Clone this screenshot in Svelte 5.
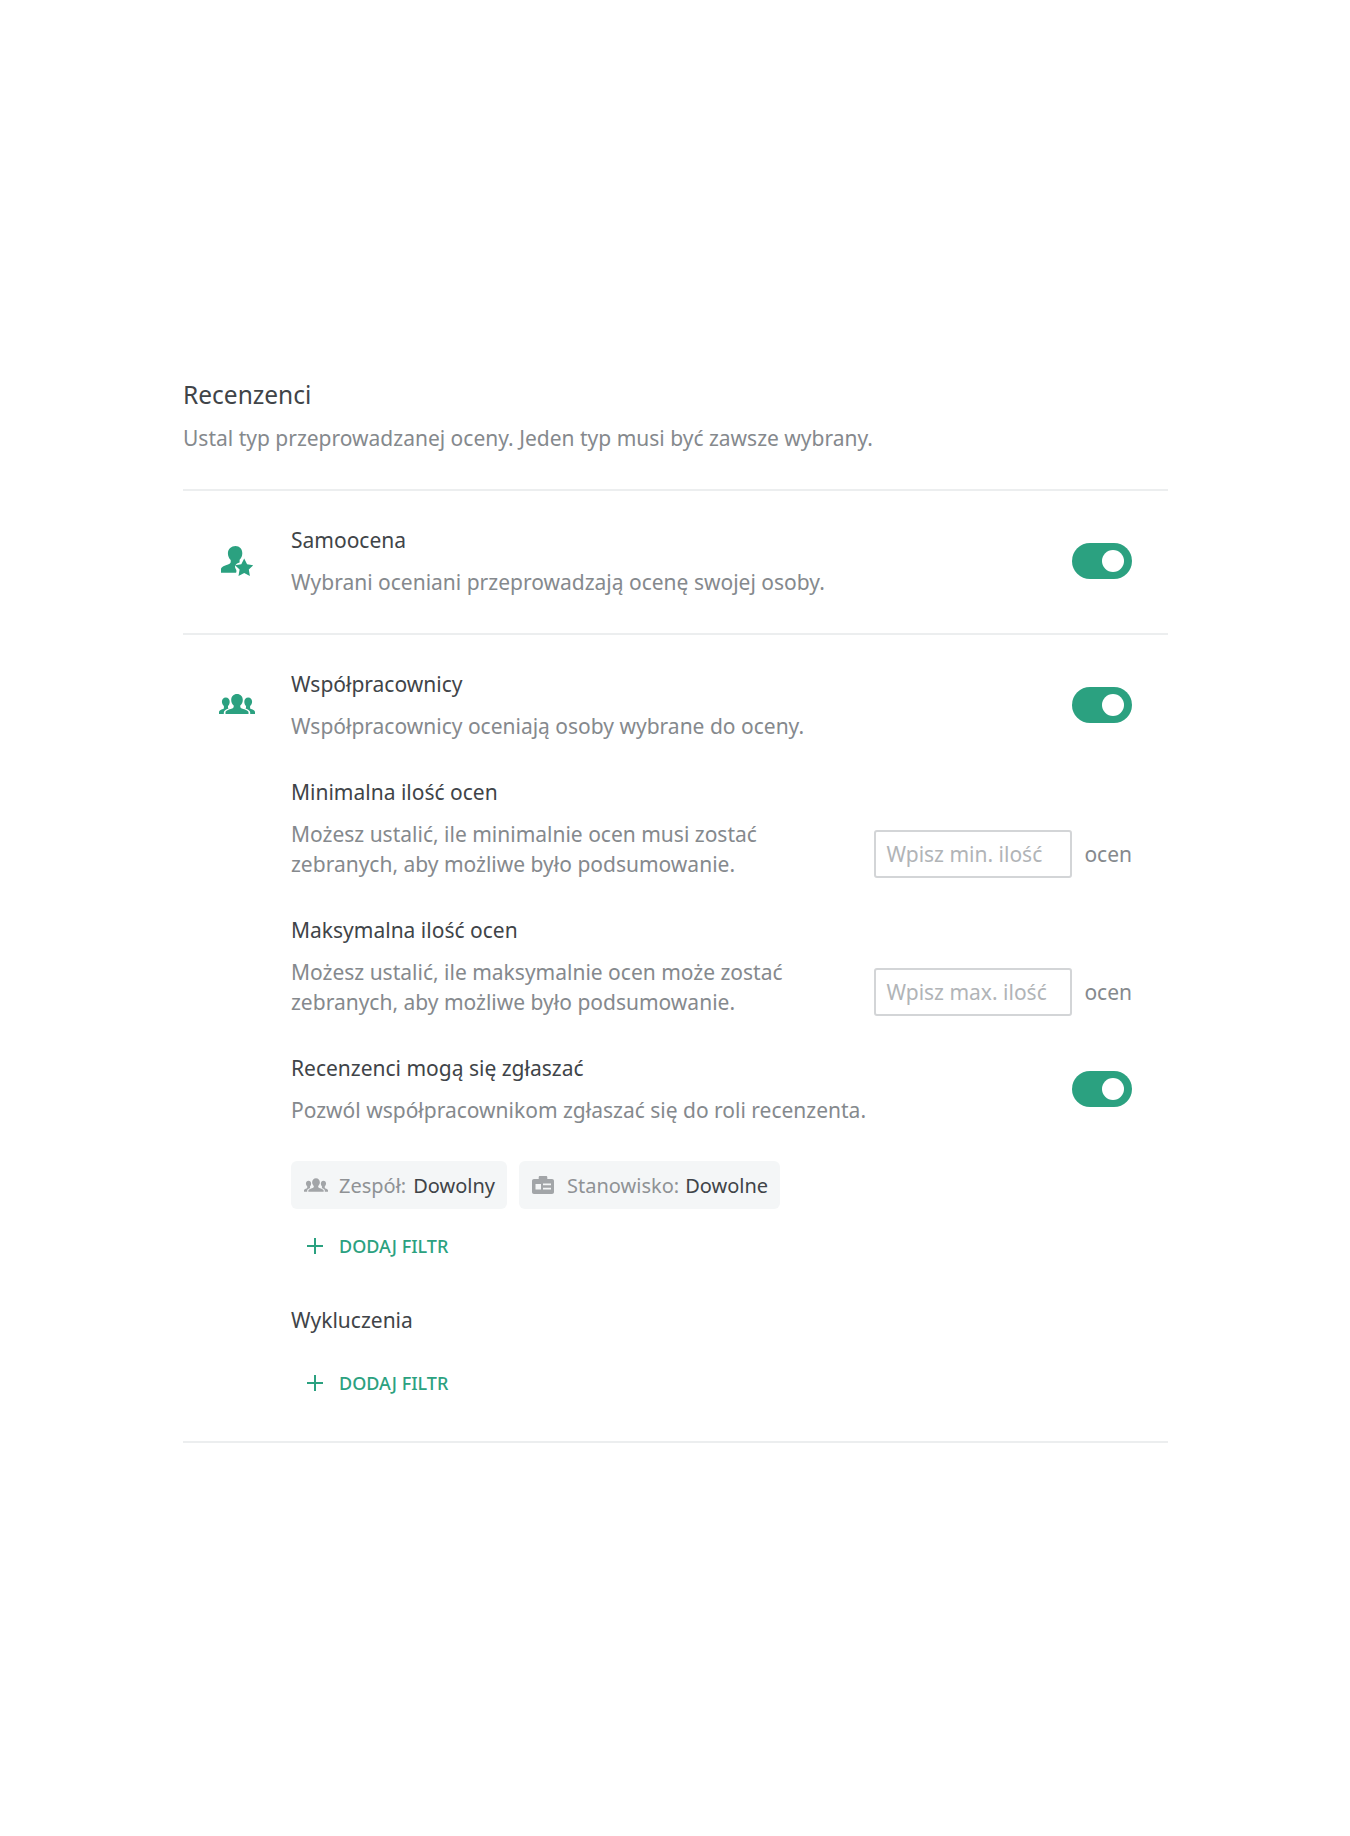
<script>
</script>

{#snippet people(cls)}
  <svg class={cls} viewBox="0 0 36 20" aria-hidden="true">
    <path d="M18 0c3.400 0 5.800 2.500 5.800 6 0 2.400-1.100 4.300-2.500 5.400v1.300c0 .9.600 1.300 1.600 1.700 3.500 1.200 6.600 2.200 6.600 3.800V20H6.500v-1.800c0-1.600 3.100-2.600 6.600-3.800 1-.4 1.600-.8 1.600-1.700v-1.300c-1.400-1.100-2.500-3-2.500-5.400C12.200 2.500 14.600 0 18 0z"/>
    <path d="M6.800 3.500c2.300 0 3.900 1.800 3.900 4.300 0 1.800-.7 3.300-1.700 4.300v1.500c0 .5.200.8.500 1-2.600 1-4.700 2.100-4.700 3.800V20H0v-2c0-1.500 1.900-2.200 3.900-2.900.7-.3 1-.6 1-1.200v-1.800C3.900 11.100 2.900 9.600 2.900 7.800c0-2.500 1.600-4.300 3.900-4.300z"/>
    <path d="M29.200 3.500c2.300 0 3.900 1.800 3.900 4.300 0 1.800-1 3.300-2 4.300v1.800c0 .6.300.9 1 1.200 2 .7 3.900 1.400 3.900 2.900v2h-4.800v-1.600c0-1.700-2.100-2.800-4.700-3.800.3-.2.500-.5.500-1v-1.500c-1-1-1.700-2.500-1.700-4.300 0-2.500 1.600-4.300 3.900-4.300z"/>
  </svg>
{/snippet}

{#snippet toggle()}
  <span class="toggle"><span class="knob"></span></span>
{/snippet}

{#snippet plus()}
  <button class="add" type="button">
    <svg viewBox="0 0 16 16" aria-hidden="true"><path d="M8 0v16M0 8h16"/></svg>
    <span>DODAJ FILTR</span>
  </button>
{/snippet}

<main class="page">
  <section class="panel">
    <header class="head">
      <h2>Recenzenci</h2>
      <p>Ustal typ przeprowadzanej oceny. Jeden typ musi być zawsze wybrany.</p>
    </header>

    <article class="group first">
      <div class="icon">
        <svg class="self" viewBox="0 0 32 31" aria-hidden="true">
          <path d="M14.500 0c4 0 6.800 3 6.800 7.200 0 2.800-1.100 5-2.700 6.500v2.700c-2 .5-3.500 1.500-4.200 2.800-.7 1.400-.3 2.700.5 4 .6 1 .8 2.100.2 3.500H0v-3.400c0-2.400 3-3.400 7-4.900 1.500-.5 2.700-1.100 2.700-2.300v-2C8 12.200 6.900 10 6.900 7.200 6.900 3 10.500 0 14.500 0z"/>
          <path d="M23.200 12.500l2.900 5.800 6.300.9-4.600 4.400 1.100 6.400-5.700-3-5.700 3 1.100-6.400-4.600-4.400 6.300-.9z"/>
        </svg>
      </div>
      <div class="body">
        <div class="line">
          <div class="text">
            <h3>Samoocena</h3>
            <p>Wybrani oceniani przeprowadzają ocenę swojej osoby.</p>
          </div>
          {@render toggle()}
        </div>
      </div>
    </article>

    <article class="group">
      <div class="icon">{@render people("team")}</div>
      <div class="body">
        <div class="line">
          <div class="text">
            <h3>Współpracownicy</h3>
            <p>Współpracownicy oceniają osoby wybrane do oceny.</p>
          </div>
          {@render toggle()}
        </div>

        <div class="line sub bottom">
          <div class="text narrow">
            <h3>Minimalna ilość ocen</h3>
            <p>Możesz ustalić, ile minimalnie ocen musi zostać zebranych, aby możliwe było podsumowanie.</p>
          </div>
          <div class="amount">
            <input type="text" placeholder="Wpisz min. ilość" />
            <span>ocen</span>
          </div>
        </div>

        <div class="line sub bottom">
          <div class="text narrow">
            <h3>Maksymalna ilość ocen</h3>
            <p>Możesz ustalić, ile maksymalnie ocen może zostać zebranych, aby możliwe było podsumowanie.</p>
          </div>
          <div class="amount">
            <input type="text" placeholder="Wpisz max. ilość" />
            <span>ocen</span>
          </div>
        </div>

        <div class="line sub">
          <div class="text">
            <h3>Recenzenci mogą się zgłaszać</h3>
            <p>Pozwól współpracownikom zgłaszać się do roli recenzenta.</p>
          </div>
          {@render toggle()}
        </div>

        <div class="chips">
          <div class="chip">
            {@render people("chip-team")}
            <span class="key">Zespół:</span>
            <span class="val">Dowolny</span>
          </div>
          <div class="chip">
            <svg class="chip-job" viewBox="0 0 22 18" aria-hidden="true">
              <path fill-rule="evenodd" d="M8 0h6c.8 0 1.300.5 1.300 1.300V3H20c1.200 0 2 .8 2 2v11c0 1.200-.8 2-2 2H2c-1.200 0-2-.8-2-2V5c0-1.200.8-2 2-2h4.700V1.300C6.700.5 7.200 0 8 0zM3.500 8v5.500H9V8zm7.500-.5v1.800h8V7.500zm0 4.200v1.800h8v-1.800z"/>
            </svg>
            <span class="key tight">Stanowisko:</span>
            <span class="val">Dowolne</span>
          </div>
        </div>

        {@render plus()}

        <h3 class="excl">Wykluczenia</h3>

        {@render plus()}
      </div>
    </article>
  </section>
</main>

<style>
  :global(body) {
    margin: 0;
    background: #fff;
  }

  .page {
    height: 1836px;
    padding-top: 375px;
    box-sizing: border-box;
    font-family: "Noto Sans", "Open Sans", sans-serif;
    color: #404448;
  }

  .panel {
    width: 985px;
    margin-left: 183px;
  }

  .head {
    padding-bottom: 31px;
    border-bottom: 2px solid #eceeef;
  }

  h2 {
    margin: 0;
    font-size: 24.5px;
    line-height: 40px;
    font-weight: 400;
  }

  .head p {
    margin: 3px 0 0;
    font-size: 21px;
    line-height: 40px;
    color: #85898d;
  }

  .group {
    display: flex;
    padding: 34px 36px 34px 0;
    border-bottom: 2px solid #eceeef;
  }

  .first {
    padding-bottom: 36px;
  }

  .icon {
    width: 108px;
    height: 72px;
    flex: none;
    display: flex;
    align-items: center;
    justify-content: center;
  }

  .self {
    width: 32px;
    height: 31px;
    fill: #2ba180;
  }

  .team {
    width: 36px;
    height: 20px;
    margin-bottom: 2px;
    fill: #2ba180;
  }

  .body {
    flex: 1;
    min-width: 0;
  }

  .line {
    display: flex;
    align-items: center;
    justify-content: space-between;
  }

  .bottom {
    align-items: flex-end;
  }

  .sub {
    margin-top: 36px;
  }

  .text {
    min-width: 0;
  }

  .narrow {
    width: 500px;
  }

  h3 {
    margin: 0;
    font-size: 21px;
    line-height: 30px;
    font-weight: 400;
    color: #404448;
  }

  .text p {
    margin: 12px 0 0;
    font-size: 21px;
    line-height: 30px;
    color: #85898d;
  }

  .toggle {
    width: 60px;
    height: 36px;
    flex: none;
    border-radius: 18px;
    background: #2ba180;
    display: flex;
    align-items: center;
    justify-content: flex-end;
    padding-right: 8px;
    box-sizing: border-box;
  }

  .knob {
    width: 22px;
    height: 22px;
    border-radius: 50%;
    background: #fff;
  }

  .amount {
    display: flex;
    align-items: center;
    gap: 12px;
    margin-bottom: 1px;
    font-size: 21px;
    color: #85898d;
  }

  input {
    width: 198px;
    height: 48px;
    box-sizing: border-box;
    padding: 0 10px;
    border: 2px solid #d3d5d7;
    border-radius: 3px;
    background: #fff;
    font: inherit;
    color: #404448;
    outline: none;
  }

  input::placeholder {
    color: #b1b4b7;
    opacity: 1;
  }

  .chips {
    display: flex;
    gap: 12px;
    margin-top: 36px;
  }

  .chip {
    height: 48px;
    display: flex;
    align-items: center;
    padding: 0 12px 0 13px;
    border-radius: 6px;
    background: #f4f6f7;
    font-size: 20px;
  }

  .chip-team {
    width: 24px;
    height: 14px;
    margin-right: 11px;
    fill: #a2a5a8;
  }

  .chip-job {
    width: 22px;
    height: 18px;
    margin-right: 13px;
    fill: #a2a5a8;
  }

  .key {
    color: #8f9295;
    margin-right: 7px;
  }

  .tight {
    margin-right: 6px;
  }

  .val {
    color: #404448;
  }

  .add {
    display: flex;
    align-items: center;
    height: 48px;
    margin-top: 13px;
    padding: 0 0 0 16px;
    border: 0;
    background: none;
    font-family: inherit;
    font-size: 18px;
    font-weight: 500;
    color: #2ba180;
  }

  .add svg {
    width: 16px;
    height: 16px;
    margin-right: 16px;
    fill: none;
    stroke: #2ba180;
    stroke-width: 2;
  }

  .excl {
    margin-top: 35px;
  }

  .excl + .add {
    margin-top: 24px;
  }
</style>
